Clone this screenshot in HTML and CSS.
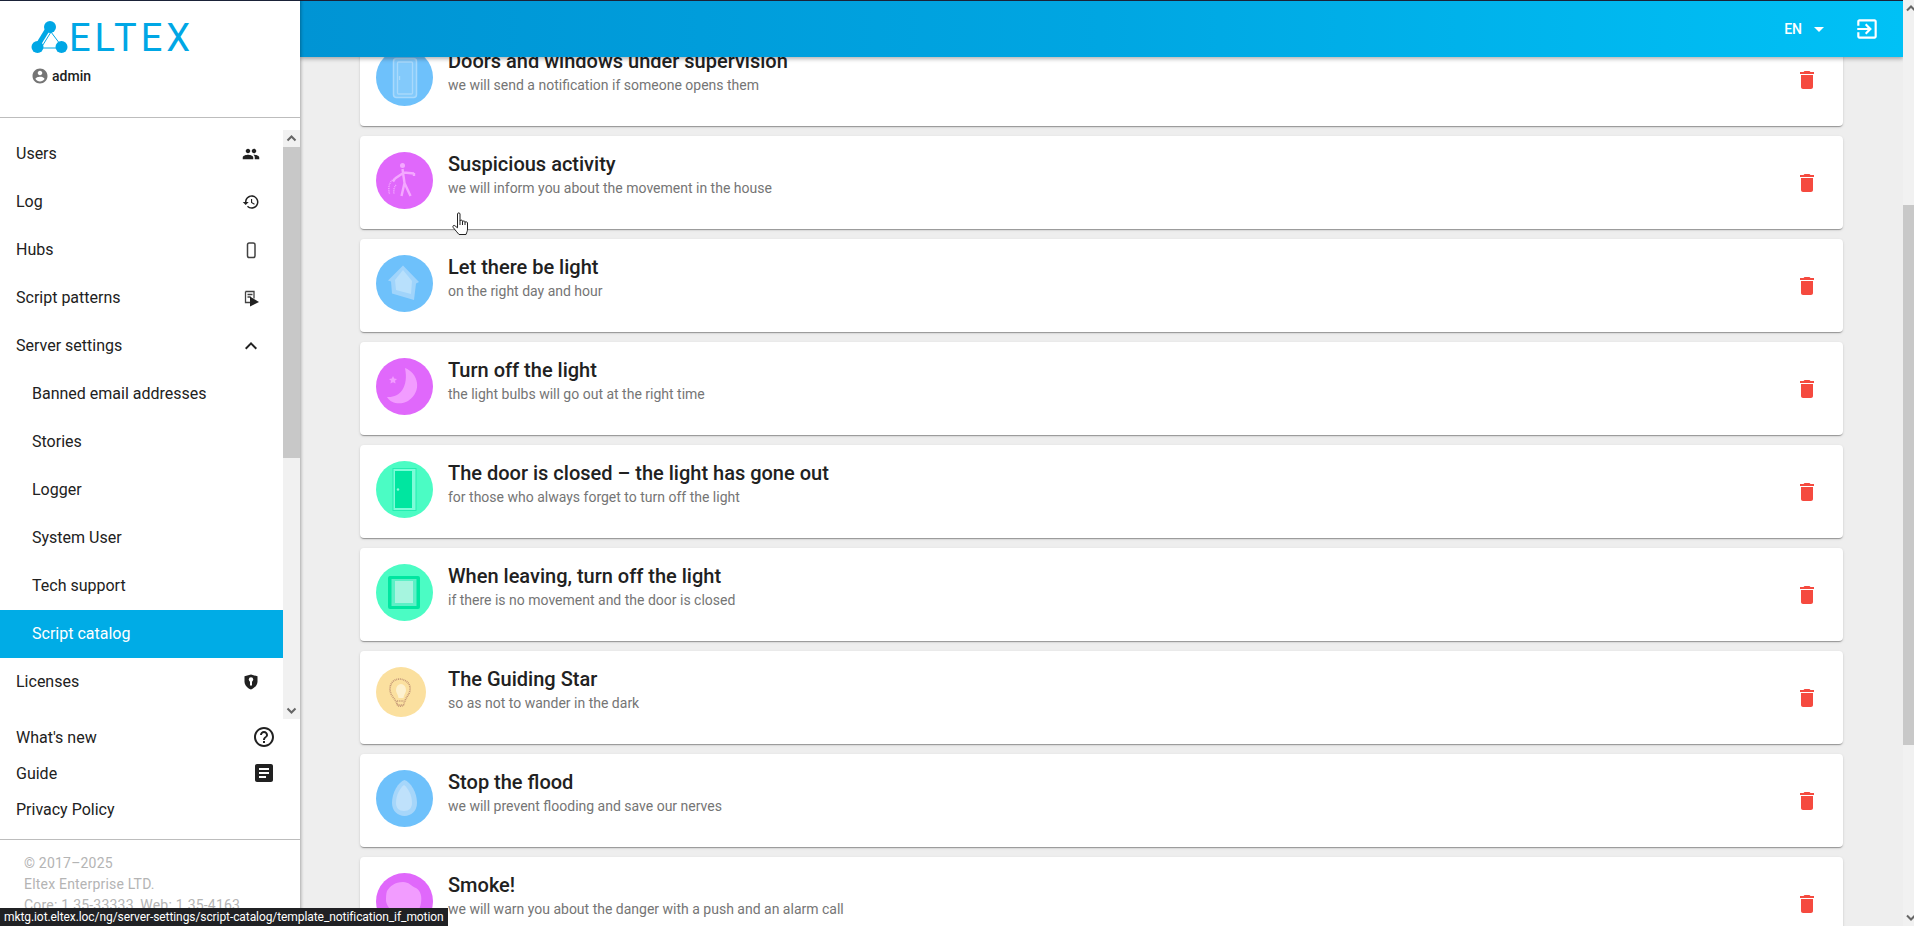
FILE: index.html
```html
<!DOCTYPE html>
<html lang="en">
<head>
<meta charset="utf-8">
<title>Script catalog</title>
<link rel="stylesheet" href="styles.css">
</head>
<body>
<div class="app">
  <aside class="sidebar">
    <div class="brand">
      <div class="logo">
        <svg class="logo-mark" viewBox="0 0 44 36" width="44" height="36">
          <path class="logo-thin" d="M21 12 L11 28 H33 Z"/>
          <path class="logo-thick" d="M19 7 L8 25" />
          <circle class="logo-node" cx="20" cy="7" r="6"/>
          <circle class="logo-node" cx="7.500" cy="27" r="6"/>
          <circle class="logo-node" cx="31.500" cy="27" r="6"/>
        </svg>
        <span class="logo-text">ELTEX</span>
      </div>
      <div class="user">
        <svg class="icon-user" viewBox="0 0 24 24"><path d="M12 2C6.480 2 2 6.480 2 12s4.480 10 10 10 10-4.480 10-10S17.520 2 12 2zm0 3c1.660 0 3 1.340 3 3s-1.340 3-3 3-3-1.340-3-3 1.340-3 3-3zm0 14.200c-2.500 0-4.710-1.280-6-3.220.03-1.990 4-3.080 6-3.080 1.990 0 5.970 1.090 6 3.080-1.290 1.940-3.500 3.220-6 3.220z"/></svg>
        <span class="user-name">admin</span>
      </div>
    </div>
    <nav class="nav">
      <ul class="nav-list">
        <li class="nav-item"><span>Users</span>
          <svg class="nav-icon" viewBox="0 0 24 24"><path d="M16 11c1.660 0 2.990-1.340 2.990-3S17.660 5 16 5s-3 1.340-3 3 1.340 3 3 3zm-8 0c1.660 0 2.990-1.340 2.990-3S9.660 5 8 5 5 6.340 5 8s1.340 3 3 3zm0 2c-2.330 0-7 1.170-7 3.500V19h14v-2.500c0-2.330-4.670-3.500-7-3.500zm8 0c-.29 0-.62.02-.97.05 1.160.84 1.970 1.970 1.970 3.450V19h6v-2.500c0-2.330-4.670-3.500-7-3.500z"/></svg></li>
        <li class="nav-item"><span>Log</span>
          <svg class="nav-icon" viewBox="0 0 24 24"><path d="M13 3c-4.970 0-9 4.030-9 9H1l3.890 3.890.07.14L9 12H6c0-3.870 3.130-7 7-7s7 3.130 7 7-3.130 7-7 7c-1.930 0-3.680-.79-4.940-2.060l-1.420 1.420C8.270 19.990 10.510 21 13 21c4.970 0 9-4.030 9-9s-4.030-9-9-9zm-1 5v5l4.280 2.540.72-1.210-3.500-2.080V8H12z"/></svg></li>
        <li class="nav-item"><span>Hubs</span>
          <svg class="nav-icon" viewBox="0 0 18 18"><rect class="hub-shape" x="5.500" y="2" width="7.500" height="14.500" rx="1.800"/></svg></li>
        <li class="nav-item"><span>Script patterns</span>
          <svg class="nav-icon" viewBox="0 0 18 18"><path class="doc-shape" d="M3.500 2.500h8.500v7M8 13.500H3.500v-11M5.500 5.500h5M5.500 8h3"/><path d="M8 7.500l9 5.500-9 4.500z"/></svg></li>
        <li class="nav-item"><span>Server settings</span>
          <svg class="nav-icon nav-icon-lg" viewBox="0 0 24 24"><path d="M12 8l-6 6 1.410 1.410L12 10.830l4.590 4.580L18 14z"/></svg></li>
        <li class="nav-item nav-sub">Banned email addresses</li>
        <li class="nav-item nav-sub">Stories</li>
        <li class="nav-item nav-sub">Logger</li>
        <li class="nav-item nav-sub">System User</li>
        <li class="nav-item nav-sub">Tech support</li>
        <li class="nav-item nav-sub nav-active">Script catalog</li>
        <li class="nav-item"><span>Licenses</span>
          <svg class="nav-icon" viewBox="0 0 18 18"><path d="M9 1.500l6.500 1.800v5.200c0 3.500-2.700 6.600-6.500 8-3.800-1.400-6.500-4.500-6.500-8V3.300z"/><circle class="key" cx="9" cy="6.500" r="2.200"/><rect class="key" x="8" y="7.500" width="2" height="5"/></svg></li>
      </ul>
      <div class="nav-scroll">
        <div class="nav-arrow"><svg viewBox="0 0 17 17"><path class="arrow" d="M4.500 10.500l4-4 4 4"/></svg></div>
        <div class="nav-track"><div class="nav-thumb"></div></div>
        <div class="nav-arrow"><svg viewBox="0 0 17 17"><path class="arrow" d="M4.500 6.500l4 4 4-4"/></svg></div>
      </div>
    </nav>
    <ul class="links">
      <li class="link"><span>What's new</span>
        <svg class="link-icon" viewBox="0 0 24 24"><path d="M11 18h2v-2h-2v2zm1-16C6.480 2 2 6.480 2 12s4.480 10 10 10 10-4.480 10-10S17.520 2 12 2zm0 18c-4.410 0-8-3.590-8-8s3.590-8 8-8 8 3.590 8 8-3.590 8-8 8zm0-14c-2.210 0-4 1.790-4 4h2c0-1.100.9-2 2-2s2 .9 2 2c0 2-3 1.750-3 5h2c0-2.250 3-2.500 3-5 0-2.210-1.790-4-4-4z"/></svg></li>
      <li class="link"><span>Guide</span>
        <svg class="link-icon" viewBox="0 0 24 24"><path d="M19 3H5c-1.100 0-2 .9-2 2v14c0 1.100.9 2 2 2h14c1.100 0 2-.9 2-2V5c0-1.100-.9-2-2-2zm-5 14H7v-2h7v2zm3-4H7v-2h10v2zm0-4H7V7h10v2z"/></svg></li>
      <li class="link"><span>Privacy Policy</span></li>
    </ul>
    <footer class="copyright">
      <div>© 2017–2025</div>
      <div>Eltex Enterprise LTD.</div>
      <div class="copyright-last">Core: 1.35-33333, Web: 1.35-4163</div>
    </footer>
  </aside>

  <main class="main">
    <header class="topbar">
      <span class="lang">EN</span>
      <span class="caret"></span>
      <svg class="exit" viewBox="0 0 24 24"><path d="M10.090 15.590L11.500 17l5-5-5-5-1.410 1.410L12.670 11H3v2h9.670l-2.580 2.590zM19 3H5c-1.110 0-2 .9-2 2v4h2V5h14v14H5v-4H3v4c0 1.100.89 2 2 2h14c1.100 0 2-.9 2-2V5c0-1.100-.9-2-2-2z"/></svg>
    </header>
    <section class="cards">

      <article class="card">
        <svg class="thumb" viewBox="0 0 57 57"><circle class="bg-blue" cx="28.500" cy="28.500" r="28.500"/><rect class="door-blue" x="17.500" y="9.500" width="23" height="39" rx="3"/><rect class="line-blue" x="21.500" y="13" width="15" height="32" rx="1"/><path class="line-blue" d="M23.500 27v4"/></svg>
        <div class="card-text"><h3 class="card-title">Doors and windows under supervision</h3><p class="card-sub">we will send a notification if someone opens them</p></div>
        <svg class="trash" viewBox="0 0 24 24"><path d="M6 19c0 1.100.9 2 2 2h8c1.100 0 2-.9 2-2V7H6v12zM19 4h-3.500l-1-1h-5l-1 1H5v2h14V4z"/></svg>
      </article>

      <article class="card">
        <svg class="thumb" viewBox="0 0 57 57"><circle class="bg-purple" cx="28.500" cy="28.500" r="28.500"/><circle class="fig-head" cx="26.500" cy="13.500" r="2.500"/><path class="fig" d="M26.500 17l2 14M19 26.500l9-6 10 1M38 21v3M28.500 31l-3 13M28.500 31l6 13M19 26.500l-2 3"/><path class="fig-thin" d="M16.500 28c-3.500 3-4.500 8-3 14M20 33c-2 2-2.500 5-2 9"/></svg>
        <div class="card-text"><h3 class="card-title">Suspicious activity</h3><p class="card-sub">we will inform you about the movement in the house</p></div>
        <svg class="trash" viewBox="0 0 24 24"><path d="M6 19c0 1.100.9 2 2 2h8c1.100 0 2-.9 2-2V7H6v12zM19 4h-3.500l-1-1h-5l-1 1H5v2h14V4z"/></svg>
      </article>

      <article class="card">
        <svg class="thumb" viewBox="0 0 57 57"><circle class="bg-blue" cx="28.500" cy="28.500" r="28.500"/><path class="fill-house" d="M27 10.500L43 27l-3 1.500-2 16.500-22-6.500-1-12-3-1z"/><path class="fill-house-light" d="M27 15l9 11-1 13-15-4-1-10z"/></svg>
        <div class="card-text"><h3 class="card-title">Let there be light</h3><p class="card-sub">on the right day and hour</p></div>
        <svg class="trash" viewBox="0 0 24 24"><path d="M6 19c0 1.100.9 2 2 2h8c1.100 0 2-.9 2-2V7H6v12zM19 4h-3.500l-1-1h-5l-1 1H5v2h14V4z"/></svg>
      </article>

      <article class="card">
        <svg class="thumb" viewBox="0 0 57 57"><circle class="bg-purple" cx="28.500" cy="28.500" r="28.500"/><path class="fill-moon" d="M29 10C42 15 47 33 32 43 25 47 15 46 11 39 23 40 33 30 29 10z"/><path class="fill-moon" d="M17 18l1.200 2.600 2.800.3-2 1.900.6 2.800-2.600-1.400-2.600 1.400.6-2.800-2-1.900 2.800-.3z"/></svg>
        <div class="card-text"><h3 class="card-title">Turn off the light</h3><p class="card-sub">the light bulbs will go out at the right time</p></div>
        <svg class="trash" viewBox="0 0 24 24"><path d="M6 19c0 1.100.9 2 2 2h8c1.100 0 2-.9 2-2V7H6v12zM19 4h-3.500l-1-1h-5l-1 1H5v2h14V4z"/></svg>
      </article>

      <article class="card">
        <svg class="thumb" viewBox="0 0 57 57"><circle class="bg-green" cx="28.500" cy="28.500" r="28.500"/><rect class="door-frame" x="17" y="7.500" width="23" height="42"/><rect class="door-leaf" x="19" y="10" width="17" height="37"/><circle class="door-knob" cx="22" cy="28.500" r="1.200"/></svg>
        <div class="card-text"><h3 class="card-title">The door is closed – the light has gone out</h3><p class="card-sub">for those who always forget to turn off the light</p></div>
        <svg class="trash" viewBox="0 0 24 24"><path d="M6 19c0 1.100.9 2 2 2h8c1.100 0 2-.9 2-2V7H6v12zM19 4h-3.500l-1-1h-5l-1 1H5v2h14V4z"/></svg>
      </article>

      <article class="card">
        <svg class="thumb" viewBox="0 0 57 57"><circle class="bg-green" cx="28.500" cy="28.500" r="28.500"/><rect class="door-leaf" x="12" y="12" width="32" height="33" rx="2"/><rect class="window-pane-outer" x="15.500" y="15" width="25" height="27"/><rect class="window-pane" x="19" y="17" width="18" height="22"/></svg>
        <div class="card-text"><h3 class="card-title">When leaving, turn off the light</h3><p class="card-sub">if there is no movement and the door is closed</p></div>
        <svg class="trash" viewBox="0 0 24 24"><path d="M6 19c0 1.100.9 2 2 2h8c1.100 0 2-.9 2-2V7H6v12zM19 4h-3.500l-1-1h-5l-1 1H5v2h14V4z"/></svg>
      </article>

      <article class="card">
        <svg class="thumb" viewBox="0 0 57 57"><circle class="bg-yellow" cx="25" cy="25" r="25"/><path class="bulb-fill" d="M20 23a5 6 0 1 1 10 0c0 3-2 4-2.500 8h-5c-.5-4-2.500-5-2.500-8z"/><path class="bulb-line" d="M21 37c-1-5-7-8-7-15 0-6 4-10 10-10 6 .5 11 5 10 11-.5 5-5 8-6 14-1 3-6 3-7 0z"/><path class="bulb-line" d="M21 34h7M21.500 38h6"/></svg>
        <div class="card-text"><h3 class="card-title">The Guiding Star</h3><p class="card-sub">so as not to wander in the dark</p></div>
        <svg class="trash" viewBox="0 0 24 24"><path d="M6 19c0 1.100.9 2 2 2h8c1.100 0 2-.9 2-2V7H6v12zM19 4h-3.500l-1-1h-5l-1 1H5v2h14V4z"/></svg>
      </article>

      <article class="card">
        <svg class="thumb" viewBox="0 0 57 57"><circle class="bg-blue" cx="28.500" cy="28.500" r="28.500"/><path class="drop-outer" d="M28.500 10c6 2 12.500 12 12.500 23 0 8-6 13-12.500 13S16 41 16 33c0-11 6.500-21 12.500-23z"/><path class="drop-inner" d="M28 15c4 3 8 10 8 18 0 5-3 8-8 8s-8-3-8-8c0-8 4-15 8-18z"/></svg>
        <div class="card-text"><h3 class="card-title">Stop the flood</h3><p class="card-sub">we will prevent flooding and save our nerves</p></div>
        <svg class="trash" viewBox="0 0 24 24"><path d="M6 19c0 1.100.9 2 2 2h8c1.100 0 2-.9 2-2V7H6v12zM19 4h-3.500l-1-1h-5l-1 1H5v2h14V4z"/></svg>
      </article>

      <article class="card">
        <svg class="thumb" viewBox="0 0 57 57"><circle class="bg-purple" cx="28.500" cy="28.500" r="28.500"/><path class="fill-moon" d="M11 18c3-5 8-9 16-9 6 0 8 4 13 6 5 3 6 9 5 15-1 7-6 14-14 14-9 0-20-8-21-16 0-4 0-7 1-10z"/></svg>
        <div class="card-text"><h3 class="card-title">Smoke!</h3><p class="card-sub">we will warn you about the danger with a push and an alarm call</p></div>
        <svg class="trash" viewBox="0 0 24 24"><path d="M6 19c0 1.100.9 2 2 2h8c1.100 0 2-.9 2-2V7H6v12zM19 4h-3.500l-1-1h-5l-1 1H5v2h14V4z"/></svg>
      </article>
    </section>
  </main>

  <div class="page-scroll">
    <svg class="page-arrow" viewBox="0 0 11 17"><path class="arrow" d="M4 10.500l4-4 4 4"/></svg>
    <div class="page-thumb"></div>
    <svg class="page-arrow" viewBox="0 0 11 17"><path class="arrow" d="M4 6.500l4 4 4-4"/></svg>
  </div>
</div>

<div class="status">mktg.iot.eltex.loc/ng/server-settings/script-catalog/template_notification_if_motion</div>
<svg class="cursor" viewBox="0 0 18 24"><path d="M5.500 2c0-1.500 2.500-1.500 2.500 0v7c0-1.200 2.500-1.200 2.500 0v.8c0-1.100 2.500-1.100 2.500 0v.8c0-1 2.500-1 2.500.2v6.200c0 2-.6 3-1.500 5.500H7C5.500 20.500 3 18 1.200 15.500c-1-1.800.8-2.800 2-1.500l2.300 1.800z"/><path d="M8 9v4M10.500 10v3M13 10.500V13"/></svg>
</body>
</html>
```
FILE: styles.css
```css
* { box-sizing: border-box; }
html, body { margin: 0; height: 100%; overflow: hidden; }
body { font-family: Roboto, "Liberation Sans", sans-serif; color: #212121; background: #eee; }
ul { list-style: none; margin: 0; padding: 0; }
h3, p { margin: 0; }

.app { display: flex; height: 926px; overflow: hidden; }

/* Sidebar */
.sidebar {
  width: 300px; flex: none; display: flex; flex-direction: column;
  background: #fff; border-top: 1px solid #1a2238;
  box-shadow: 1px 0 3px rgba(0,0,0,.3); position: relative; z-index: 3;
}
.brand { height: 117px; flex: none; border-bottom: 1px solid #bdbdbd; padding: 18px 0 0 30px; }
.logo { display: flex; align-items: center; height: 38px; gap: 1px; }
.logo-mark { flex: none; }
.logo-thin { fill: none; stroke: #00a7e5; stroke-width: 1; }
.logo-thick { fill: none; stroke: #00a7e5; stroke-width: 5; }
.logo-node { fill: #00a7e5; }
.logo-text { font-size: 38px; line-height: 38px; letter-spacing: 4px; color: #00a7e5; font-weight: 400; margin-left: -6px; }
.user { display: flex; align-items: center; gap: 3px; margin-top: 9px; padding-left: 1px; height: 20px; }
.icon-user { width: 18px; height: 18px; fill: #757575; }
.user-name { font-size: 14px; font-weight: 500; }

.nav { display: flex; height: 590px; margin-top: 11px; flex: none; margin-bottom: 0; }
.nav-list { width: 283px; flex: none; overflow: hidden; padding-top: 1px; }
.nav-item {
  height: 48px; display: flex; align-items: center; justify-content: space-between;
  padding: 0 23px 0 16px; font-size: 16px; line-height: 20px; color: #212121;
}
.nav-sub { padding-left: 32px; }
.nav-active { background: #00ace6; color: #fff; }
.nav-icon { width: 18px; height: 18px; fill: #212121; flex: none; }
.nav-icon-lg { width: 24px; height: 24px; margin-right: -3px; }
.hub-shape { fill: none; stroke: #424242; stroke-width: 1.500; }
.doc-shape { fill: none; stroke: #424242; stroke-width: 1.300; }
.key { fill: #fff; }
.nav-scroll { width: 17px; flex: none; display: flex; flex-direction: column; background: #f1f1f1; margin-top: 1px; }
.nav-arrow { height: 17px; flex: none; }
.nav-arrow svg { display: block; width: 17px; height: 17px; }
.arrow { fill: none; stroke: #666; stroke-width: 2; }
.nav-track { flex: 1; }
.nav-thumb { height: 311px; background: #c8c8c8; }

.links { flex: none; }
.link {
  height: 36px; display: flex; align-items: center; justify-content: space-between;
  padding: 0 24px 0 16px; font-size: 16px;
}
.link-icon { width: 24px; height: 24px; fill: #212121; }

.copyright { flex: none; margin-top: 12px; border-top: 1px solid #bdbdbd; padding: 13px 0 0 24px; font-size: 14px; line-height: 21px; color: #b4b4b4; letter-spacing: .2px; }
.copyright-last { white-space: nowrap; }

/* Main */
.main { flex: 1; position: relative; background: #eee; overflow: hidden; min-width: 0; }
.topbar {
  position: absolute; top: 0; left: 0; right: 0; height: 57px; z-index: 2;
  display: flex; align-items: center; justify-content: flex-end;
  border-top: 1px solid #1a2238;
  background: linear-gradient(90deg, #0094d4 0%, #00a6e2 50%, #00c1f6 100%);
  box-shadow: 0 2px 4px rgba(0,0,0,.3); padding-right: 23px; color: #fff;
}
.lang { font-size: 14px; font-weight: 500; }
.caret { width: 0; height: 0; border: 5px solid transparent; border-top-color: #fff; border-bottom: 0; margin: 0 30px 0 12px; }
.exit { width: 26px; height: 26px; fill: #fff; }

.cards { display: flex; flex-direction: column; gap: 10px; padding: 33px 60px 0; }
.card {
  height: 93px; flex: none; display: flex; align-items: flex-start; padding: 16px 24px 0 16px;
  background: #fff; border-radius: 4px;
  box-shadow: 0 2px 1px -1px rgba(0,0,0,.2), 0 1px 1px rgba(0,0,0,.14), 0 1px 3px rgba(0,0,0,.12);
}
.thumb { width: 57px; height: 57px; flex: none; margin-right: 15px; }
.card-text { flex: 1; min-width: 0; }
.card-title { font-size: 20px; line-height: 24px; font-weight: 500; color: #212121; }
.card-sub { font-size: 14px; line-height: 20px; color: #757575; margin-top: 2px; }
.trash { width: 24px; height: 24px; fill: #f54a3f; flex: none; margin-top: 19px; }

.bg-blue { fill: #6ec1fb; }
.bg-purple { fill: #e068fb; }
.bg-green { fill: #4bfcc4; }
.bg-yellow { fill: #fbe09f; }
.door-blue { fill: #83cafb; stroke: #a8d9fc; stroke-width: 1.500; }
.line-blue { fill: none; stroke: #a8d9fc; stroke-width: 1.300; }
.fig { fill: none; stroke: #f4a8ff; stroke-width: 2.400; }
.fig-thin { fill: none; stroke: #f4a8ff; stroke-width: 1.400; stroke-dasharray: 1 .8; }
.fig-head { fill: #f4a8ff; }
.fill-house { fill: #a0d4fb; }
.fill-house-light { fill: #b8e0fc; }
.fill-moon { fill: #f29cff; }
.door-frame { fill: #7dfcd8; stroke: #22eeb0; stroke-width: 1; }
.door-leaf { fill: #00e6a0; }
.door-knob { fill: #8dfadb; }
.window-pane-outer { fill: #5cf0c6; }
.window-pane { fill: #a6f5df; }
.bulb-fill { fill: #fdf1cf; }
.bulb-line { fill: none; stroke: #c69a78; stroke-width: 1.700; stroke-dasharray: 1 .8; }
.drop-outer { fill: #a6d6fa; }
.drop-inner { fill: #bfe1fb; }

/* Window scrollbar */
.page-scroll { width: 11px; flex: none; background: #f1f1f1; display: flex; flex-direction: column; overflow: hidden; }
.page-arrow { width: 11px; height: 17px; flex: none; }
.page-thumb { height: 540px; flex: none; margin-top: 188px; margin-bottom: auto; background: #c8c8c8; }

/* Overlays */
.status {
  position: absolute; left: 0; bottom: 0; height: 18px; padding: 0 4px;
  background: #202124; color: #fff; font-size: 12px; letter-spacing: -.08px; line-height: 18px; white-space: nowrap; z-index: 5;
  font-family: Roboto, "Open Sans", sans-serif;
}
.cursor { position: absolute; left: 452px; top: 212px; width: 18px; height: 24px; z-index: 4; fill: #fff; stroke: #222; stroke-width: 1; }
```
